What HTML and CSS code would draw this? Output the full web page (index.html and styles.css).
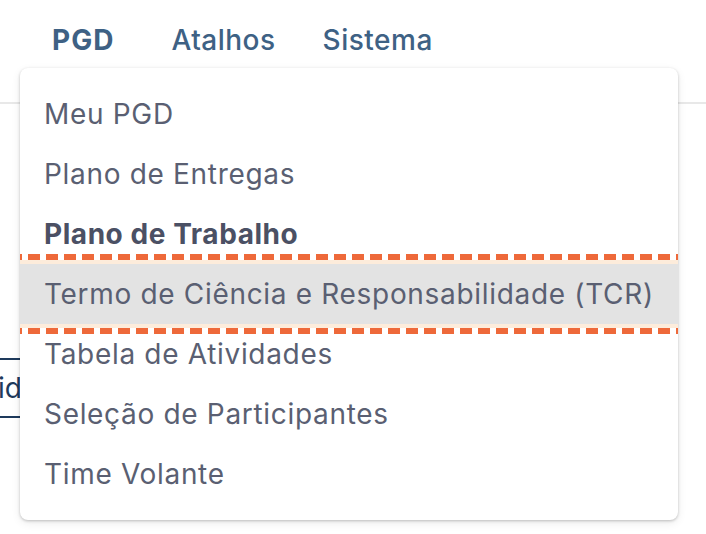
FILE: index.html
```html
<!DOCTYPE html>
<html lang="pt-BR">
<head>
<meta charset="utf-8">
<title>PGD</title>
<link rel="stylesheet" href="styles.css">
</head>
<body>
  <header class="topbar">
    <nav class="nav">
      <a class="nav-item nav-item--active">PGD</a>
      <a class="nav-item">Atalhos</a>
      <a class="nav-item nav-item--last">Sistema</a>
    </nav>
  </header>
  <main class="content">
    <div class="field">id</div>
  </main>
  <ul class="menu">
    <li class="menu-item">Meu PGD</li>
    <li class="menu-item">Plano de Entregas</li>
    <li class="menu-item menu-item--current">Plano de Trabalho</li>
    <li class="menu-item menu-item--focus">Termo de Ciência e Responsabilidade (TCR)</li>
    <li class="menu-item">Tabela de Atividades</li>
    <li class="menu-item">Seleção de Participantes</li>
    <li class="menu-item">Time Volante</li>
  </ul>
</body>
</html>
```
FILE: styles.css
```css
html, body {
  margin: 0;
  padding: 0;
  background: #ffffff;
  font-family: Inter, "Noto Sans", sans-serif;
}

.topbar {
  height: 102px;
  border-bottom: 2px solid #e8e8e8;
}

.nav {
  display: flex;
  padding: 23px 0 0 52px;
  gap: 57px;
}

.nav-item {
  font-size: 28px;
  line-height: 34px;
  font-weight: 500;
  letter-spacing: 0.5px;
  color: #3e6184;
  text-decoration: none;
}

.nav-item--last {
  margin-left: -10px;
}

.nav-item--active {
  font-weight: 700;
  letter-spacing: 1px;
}

.content {
  padding-top: 254px;
}

.field {
  width: 200px;
  height: 56px;
  border-top: 2px solid #1e3a5c;
  border-bottom: 2px solid #1e3a5c;
  font-size: 28px;
  line-height: 56px;
  color: #1e3a5c;
  text-indent: -2px;
}

.menu {
  position: absolute;
  left: 20px;
  top: 68px;
  width: 658px;
  margin: 0;
  padding: 16px 0;
  list-style: none;
  background: #ffffff;
  border-radius: 8px;
  overflow: hidden;
  box-shadow: 0 1px 3px rgba(0, 0, 0, 0.22), 0 3px 10px rgba(0, 0, 0, 0.08);
}

.menu-item {
  position: relative;
  height: 60px;
  padding: 0 24px;
  font-size: 28px;
  line-height: 60px;
  letter-spacing: 0.68px;
  color: #5a5f72;
  white-space: nowrap;
}

.menu-item--current {
  font-weight: 700;
  letter-spacing: 0.55px;
  color: #4b5064;
}

.menu-item--focus {
  background: #e3e3e3;
  box-shadow: 0 0 0 4px #fdecdb;
}

.menu-item--focus::before,
.menu-item--focus::after {
  content: "";
  position: absolute;
  left: -10px;
  right: -10px;
  height: 6px;
  background: repeating-linear-gradient(to right, #ee693a 0 12px, transparent 12px 18px);
}

.menu-item--focus::before {
  top: -10px;
}

.menu-item--focus::after {
  bottom: -10px;
}
```
